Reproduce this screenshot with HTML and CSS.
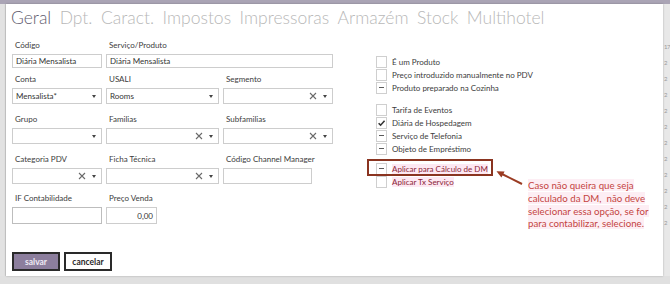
FILE: index.html
```html
<!DOCTYPE html>
<html lang="pt">
<head>
<meta charset="utf-8">
<title>Serviço/Produto</title>
<link rel="stylesheet" href="styles.css">
</head>
<body>
<div class="topbar"></div>
<div class="main">
  <div class="leftstrip"></div>
  <div class="modal">
    <nav class="tabs">
      <span class="tab active">Geral</span>
      <span class="tab">Dpt.</span>
      <span class="tab">Caract.</span>
      <span class="tab">Impostos</span>
      <span class="tab">Impressoras</span>
      <span class="tab">Armazém</span>
      <span class="tab">Stock</span>
      <span class="tab">Multihotel</span>
    </nav>
    <div class="content">
      <div class="form">
        <div class="field r1 c1"><label>Código</label><div class="input h14">Diária Mensalista</div></div>
        <div class="field r1 c23"><label>Serviço/Produto</label><div class="input h14">Diária Mensalista</div></div>

        <div class="field r2"><label>Conta</label><div class="select"><span class="val">Mensalista*</span><span class="caret"></span></div></div>
        <div class="field r2"><label>USALI</label><div class="select"><span class="val">Rooms</span><span class="caret"></span></div></div>
        <div class="field r2"><label>Segmento</label><div class="select"><span class="val"></span><svg class="x" viewBox="0 0 8 8"><path d="M1 1L7 7M7 1L1 7"/></svg><span class="caret"></span></div></div>

        <div class="field r3"><label>Grupo</label><div class="select"><span class="val"></span><span class="caret"></span></div></div>
        <div class="field r3"><label>Familias</label><div class="select"><span class="val"></span><svg class="x" viewBox="0 0 8 8"><path d="M1 1L7 7M7 1L1 7"/></svg><span class="caret"></span></div></div>
        <div class="field r3"><label>Subfamilias</label><div class="select"><span class="val"></span><svg class="x" viewBox="0 0 8 8"><path d="M1 1L7 7M7 1L1 7"/></svg><span class="caret"></span></div></div>

        <div class="field r4"><label>Categoria PDV</label><div class="select"><span class="val"></span><svg class="x" viewBox="0 0 8 8"><path d="M1 1L7 7M7 1L1 7"/></svg><span class="caret"></span></div></div>
        <div class="field r4"><label>Ficha Técnica</label><div class="select"><span class="val"></span><svg class="x" viewBox="0 0 8 8"><path d="M1 1L7 7M7 1L1 7"/></svg><span class="caret"></span></div></div>
        <div class="field r4"><label>Código Channel Manager</label><div class="input h16 w89"></div></div>

        <div class="field r5"><label>IF Contabilidade</label><div class="input h17 dark"></div></div>
        <div class="field r5"><label>Preço Venda</label><div class="input h17 w51 num">0,00</div></div>
      </div>

      <div class="checks">
        <div class="group">
          <div class="check"><span class="box"></span><span class="lbl">É um Produto</span></div>
          <div class="check"><span class="box"></span><span class="lbl">Preço introduzido manualmente no PDV</span></div>
          <div class="check"><span class="box dash"></span><span class="lbl">Produto preparado na Cozinha</span></div>
        </div>
        <div class="group">
          <div class="check"><span class="box"></span><span class="lbl">Tarifa de Eventos</span></div>
          <div class="check"><span class="box"><svg class="tick" viewBox="0 0 10 10"><path d="M1.8 5.2L4 7.4L8.4 2.4"/></svg></span><span class="lbl">Diária de Hospedagem</span></div>
          <div class="check"><span class="box dash"></span><span class="lbl">Serviço de Telefonia</span></div>
          <div class="check"><span class="box dash"></span><span class="lbl">Objeto de Empréstimo</span></div>
        </div>
        <div class="group last">
          <div class="check marked"><span class="box dash"></span><span class="lbl">Aplicar para Cálculo de DM</span>
            <span class="redbox"></span>
            <svg class="arrow" viewBox="0 0 32 20"><path class="shaft" d="M28 16L8 6"/><path class="head" d="M2.5 3.2L10.6 3.6L7.4 9.4Z"/></svg>
          </div>
          <div class="check marked"><span class="box"></span><span class="lbl">Aplicar Tx Serviço</span></div>
        </div>
      </div>
    </div>

    <div class="buttons">
      <button class="btn primary">salvar</button>
      <button class="btn">cancelar</button>
    </div>

    <p class="note"><span>Caso não queira que seja<br>calculado da DM,&nbsp; não deve<br>selecionar essa opção, se for<br>para contabilizar, selecione.</span></p>
  </div>
  <div class="rightstrip">
    <span>17</span><span>2</span><span>2</span><span>2</span><span>2</span><span>2</span><span>2</span><span>2</span><span>2</span><span>2</span><span>2</span><span>2</span>
  </div>
</div>
<div class="bottombar"></div>
</body>
</html>
```
FILE: styles.css
```css
* { box-sizing: border-box; }
html, body { margin: 0; padding: 0; }
body {
  width: 670px;
  height: 284px;
  overflow: hidden;
  background: #e4e4e4;
  font-family: Lato, "Liberation Sans", sans-serif;
  font-size: 8px;
  color: #3a3a3a;
}
.topbar { height: 4px; background: #aaa4b5; }
.main { display: flex; height: 272px; }
.leftstrip { width: 6px; background: #e2e2e2; border-right: 1px solid #d0d0d0; }
.rightstrip {
  flex: 1;
  background: #e8e8e8;
  display: flex;
  flex-direction: column;
  padding-top: 35px;
  padding-left: 1px;
  font-size: 6px;
  letter-spacing: -0.5px;
  line-height: 16px;
  color: #9a9a9a;
  overflow: hidden;
  white-space: nowrap;
}
.bottombar { height: 8px; background: #e0e0e0; }

.modal {
  position: relative;
  width: 657px;
  background: #fff;
  box-shadow: 0 0 2px rgba(0,0,0,0.25);
  padding: 4px 0 0 6px;
}

.tabs {
  display: flex;
  gap: 8.5px;
  height: 20px;
  margin-left: -1px;
  font-family: Lato, "Open Sans", sans-serif;
  font-weight: 300;
  font-size: 17.5px;
  line-height: 20px;
  color: #b8b8b8;
  white-space: nowrap;
}
.tab.active { color: #625d6e; }

.content { display: flex; margin-top: 12px; }

.form {
  display: grid;
  grid-template-columns: 90px 113px 110px;
  column-gap: 4px;
  width: 321px;
  align-content: start;
}
.field { display: flex; flex-direction: column; }
.field label {
  display: block;
  height: 11px;
  line-height: 11px;
  margin: 0 0 3px 3px;
  white-space: nowrap;
  color: #3c3c3c;
}
.c23 { grid-column: 2 / 4; }
.r2 { margin-top: 6px; }
.r3 { margin-top: 10px; }
.r4 { margin-top: 10px; }
.r5 { margin-top: 9px; }

.input {
  border: 1px solid #cdcdcd;
  padding: 0 3px;
  display: flex;
  align-items: center;
  color: #333;
  white-space: nowrap;
}
.input.dark { border-color: #bdbdbd; }
.h14 { height: 14px; }
.h16 { height: 16px; }
.h17 { height: 17px; }
.w89 { width: 89px; }
.w51 { width: 51px; }
.num { justify-content: flex-end; padding-right: 3px; }

.select {
  height: 16px;
  border: 1px solid #cdcdcd;
  display: flex;
  align-items: center;
  padding: 0 5px 0 3px;
  color: #333;
}
.select .val { flex: 1; white-space: nowrap; }
.x {
  width: 8px;
  height: 8px;
  margin-right: 6px;
  fill: none;
  stroke: #6a6a6a;
  stroke-width: 1.1;
}
.caret {
  width: 0;
  height: 0;
  border-left: 2.5px solid transparent;
  border-right: 2.5px solid transparent;
  border-top: 3px solid #444;
  margin-top: 1px;
}

.checks { margin-left: 43px; padding-top: 15px; }
.group + .group { margin-top: 9px; }
.group.last { margin-top: 7px; }
.check {
  position: relative;
  display: flex;
  align-items: center;
  height: 13px;
  white-space: nowrap;
}
.box {
  width: 11px;
  height: 12px;
  border: 1px solid #cfcfcf;
  background: #fff;
  display: flex;
  align-items: center;
  justify-content: center;
  flex: none;
}
.box.dash::before {
  content: "";
  width: 5px;
  height: 1.5px;
  background: #5a5a5a;
}
.tick {
  width: 10px;
  height: 10px;
  fill: none;
  stroke: #333;
  stroke-width: 1.7;
}
.lbl { margin-left: 5px; color: #3c3c3c; }
.check.marked .lbl { color: #8a1e35; background: #fde8f2; }
.redbox {
  position: absolute;
  left: -9px;
  top: -3px;
  width: 126px;
  height: 17px;
  border: 2px solid #8a3420;
}
.arrow {
  position: absolute;
  left: 118px;
  top: 6px;
  width: 32px;
  height: 20px;
  overflow: visible;
}
.arrow .shaft { stroke: #9a3b22; stroke-width: 2; fill: none; }
.arrow .head { fill: #9a3b22; }

.buttons {
  display: flex;
  gap: 4px;
  margin-top: 28px;
}
.btn {
  height: 19px;
  width: 48px;
  border: 2px solid #2a2a2a;
  background: #fff;
  font-family: Lato, "Liberation Sans", sans-serif;
  font-size: 8.5px;
  font-weight: 700;
  color: #2a2a2a;
  padding: 0;
}
.btn.primary { background: #8c7e9d; color: #efeaf4; }

.note {
  position: absolute;
  left: 522px;
  top: 175px;
  margin: 0;
  font-size: 9.7px;
  line-height: 12.8px;
  color: #c4443f;
  white-space: nowrap;
}
.note span { background: #fdeef4; }
```
